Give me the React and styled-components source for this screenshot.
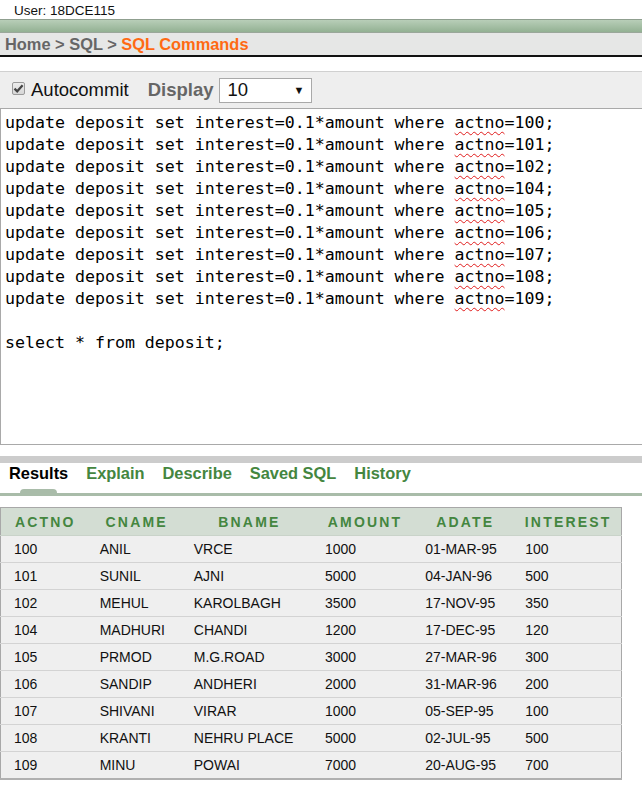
import styled, { createGlobalStyle } from 'styled-components';

const GlobalStyle = createGlobalStyle`
  html, body {
    margin: 0;
    padding: 0;
    background: #fff;
    overflow-x: hidden;
    font-family: "Liberation Sans", Arial, sans-serif;
  }
`;

const codeLines = [100, 101, 102, 104, 105, 106, 107, 108, 109];

const rows = [
  ['100', 'ANIL', 'VRCE', '1000', '01-MAR-95', '100'],
  ['101', 'SUNIL', 'AJNI', '5000', '04-JAN-96', '500'],
  ['102', 'MEHUL', 'KAROLBAGH', '3500', '17-NOV-95', '350'],
  ['104', 'MADHURI', 'CHANDI', '1200', '17-DEC-95', '120'],
  ['105', 'PRMOD', 'M.G.ROAD', '3000', '27-MAR-96', '300'],
  ['106', 'SANDIP', 'ANDHERI', '2000', '31-MAR-96', '200'],
  ['107', 'SHIVANI', 'VIRAR', '1000', '05-SEP-95', '100'],
  ['108', 'KRANTI', 'NEHRU PLACE', '5000', '02-JUL-95', '500'],
  ['109', 'MINU', 'POWAI', '7000', '20-AUG-95', '700'],
];

const columns = [
  { name: 'ACTNO', width: 89 },
  { name: 'CNAME', width: 94 },
  { name: 'BNAME', width: 131 },
  { name: 'AMOUNT', width: 100 },
  { name: 'ADATE', width: 100 },
  { name: 'INTEREST', width: 106 },
];

const tabs = ['Results', 'Explain', 'Describe', 'Saved SQL', 'History'];

function App() {
  return (
    <Page>
      <GlobalStyle />
      <UserLine>User: 18DCE115</UserLine>
      <GreenBar />
      <Breadcrumb>
        Home &gt; SQL &gt; <Current>SQL Commands</Current>
      </Breadcrumb>

      <Toolbar>
        <CheckLabel>
          <CheckBox>
            <svg width="11" height="11" viewBox="0 0 11 11">
              <path d="M1.5 5.6 L4.2 8.3 L9.6 2.2" fill="none" stroke="#444" strokeWidth="2.2" />
            </svg>
          </CheckBox>
          Autocommit
        </CheckLabel>
        <DisplayLabel>Display</DisplayLabel>
        <Select>
          <span>10</span>
          <Arrow>▼</Arrow>
        </Select>
      </Toolbar>

      <Editor>
        {codeLines.map(n => (
          <CodeLine key={n}>
            update deposit set interest=0.1*amount where <Misspelt>actno</Misspelt>={n};
          </CodeLine>
        ))}
        <CodeLine>&nbsp;</CodeLine>
        <CodeLine>select * from deposit;</CodeLine>
      </Editor>

      <Divider />
      <TabBar>
        {tabs.map((t, i) => (
          <Tab key={t} active={i === 0}>
            {t}
          </Tab>
        ))}
      </TabBar>

      <Table>
        <colgroup>
          {columns.map(c => (
            <col key={c.name} style={{ width: c.width }} />
          ))}
        </colgroup>
        <thead>
          <tr>
            {columns.map(c => (
              <Th key={c.name}>{c.name}</Th>
            ))}
          </tr>
        </thead>
        <tbody>
          {rows.map(r => (
            <tr key={r[0]}>
              {r.map((v, i) => (
                <Td key={i}>{v}</Td>
              ))}
            </tr>
          ))}
        </tbody>
      </Table>
    </Page>
  );
}

const Page = styled.div`
  width: 100%;
  overflow: hidden;
  padding-bottom: 6px;
`;

const UserLine = styled.div`
  height: 19px;
  line-height: 21px;
  padding-left: 14px;
  font-size: 13.5px;
  color: #111;
`;

const GreenBar = styled.div`
  height: 12px;
  border-top: 1px solid #8f9f8f;
  border-bottom: 1px solid #9aa79a;
  background: linear-gradient(#b8ceb8, #93b193);
`;

const Breadcrumb = styled.div`
  height: 22px;
  line-height: 23px;
  padding-left: 5px;
  background: #e6e7e6;
  border-bottom: 2px solid #111;
  font-size: 16.4px;
  font-weight: bold;
  color: #666;
`;

const Current = styled.span`
  color: #ff6a13;
`;

const Toolbar = styled.div`
  margin-top: 14px;
  height: 36px;
  display: flex;
  align-items: center;
  padding-left: 12px;
  background: #eeeeee;
  border-top: 1px solid #d0d0d0;
`;

const CheckLabel = styled.label`
  display: flex;
  align-items: center;
  gap: 6px;
  font-size: 18.5px;
  color: #111;
`;

const CheckBox = styled.span`
  width: 11px;
  height: 11px;
  margin-top: -4px;
  border: 1px solid #9a9a9a;
  border-radius: 2px;
  background: linear-gradient(#ececec, #d6d6d6);
  display: flex;
  align-items: center;
  justify-content: center;
`;

const DisplayLabel = styled.span`
  margin-left: 19px;
  font-size: 18.5px;
  font-weight: bold;
  color: #666;
`;

const Select = styled.div`
  margin-left: 6px;
  border: 1px solid #a9a9a9;
  background: #fff;
  display: flex;
  align-items: center;
  justify-content: space-between;
  padding: 0 7px 0 7px;
  box-sizing: border-box;
  width: 93px;
  height: 25px;
  font-size: 18.5px;
  color: #111;
`;

const Arrow = styled.span`
  font-size: 11px;
  color: #111;
`;

const Editor = styled.div`
  height: 329px;
  border: 1px solid #a9a9a9;
  border-right: none;
  padding: 3px 0 3px 4px;
  font-family: "DejaVu Sans Mono", "Liberation Mono", monospace;
  font-size: 16.6px;
  line-height: 22px;
  color: #000;
  white-space: pre;
`;

const CodeLine = styled.div`
  height: 22px;
`;

const Misspelt = styled.span`
  text-decoration: underline wavy #e01b1b;
  text-decoration-thickness: 1px;
  text-underline-offset: 3px;
`;

const Divider = styled.div`
  margin-top: 11px;
  height: 7px;
  background: #cccccc;
`;

const TabBar = styled.div`
  display: flex;
  gap: 18px;
  height: 30px;
  padding-left: 9px;
  border-bottom: 3px solid #a9bca9;
`;

const Tab = styled.div`
  position: relative;
  line-height: 20px;
  font-size: 16.4px;
  font-weight: bold;
  color: ${p => (p.active ? '#000' : '#44863f')};

  &::after {
    content: '';
    display: ${p => (p.active ? 'block' : 'none')};
    position: absolute;
    left: 11px;
    bottom: 0;
    width: 37px;
    height: 4px;
    border-radius: 4px 4px 0 0;
    background: #a9bca9;
  }
`;

const Table = styled.table`
  margin-top: 11px;
  width: 622px;
  table-layout: fixed;
  border-collapse: collapse;
  border: 1px solid #a8a8a8;
  border-bottom: 2px solid #b0b0b0;
`;

const Th = styled.th`
  height: 27px;
  padding: 0;
  background: #d3ddd3;
  color: #44863f;
  font-size: 14px;
  font-weight: bold;
  letter-spacing: 2.2px;
  text-align: center;
  border-bottom: 1px solid #c9d3c9;
`;

const Td = styled.td`
  height: 26px;
  padding: 0 0 0 10px;
  background: #efefef;
  border-bottom: 1px solid #d3d3d3;
  font-size: 14px;
  color: #111;
  white-space: nowrap;

  &:first-child {
    padding-left: 13px;
  }
`;

export default App;
